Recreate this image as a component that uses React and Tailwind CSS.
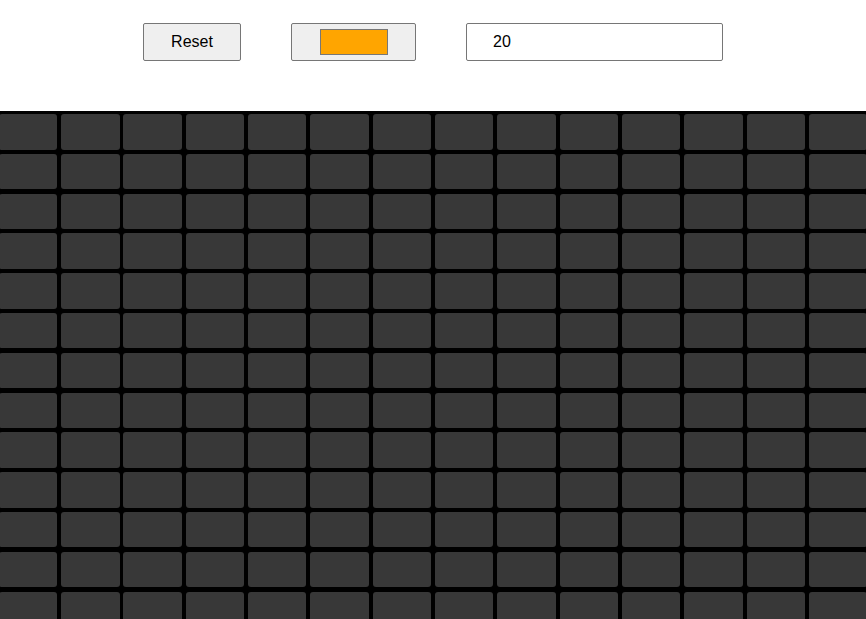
export default function App() {
  const rows = Array.from({ length: 14 })
  const cols = Array.from({ length: 14 })

  return (
    <div className="h-screen overflow-hidden bg-white font-['Liberation_Sans',Arial,sans-serif]">
      <div className="h-[111px] flex justify-center items-start gap-[50px] pt-[23px]">
        <button className="w-[98px] h-[38px] bg-[#efefef] border border-[#767676] rounded-[2px] text-[16px] text-black">
          Reset
        </button>
        <button className="w-[125px] h-[38px] bg-[#efefef] border border-[#767676] rounded-[2px] flex items-center justify-center">
          <span className="block w-[68px] h-[26px] bg-[#ffa500] border border-[#777777]"></span>
        </button>
        <input
          type="number"
          defaultValue="20"
          className="w-[257px] h-[38px] border border-[#767676] rounded-[2px] pl-[26px] text-[16px] text-black outline-none"
        />
      </div>
      <div className="bg-black pt-[3px] h-full overflow-hidden">
        <div className="grid grid-cols-[repeat(14,58.5px)] gap-x-[3.83px] gap-y-[4.3px] ml-[-1.33px] auto-rows-[35.5px]">
          {rows.map((_, r) =>
            cols.map((_, c) => (
              <div key={r + '-' + c} className="bg-[#383838] rounded-[3px]" />
            ))
          )}
        </div>
      </div>
    </div>
  )
}
